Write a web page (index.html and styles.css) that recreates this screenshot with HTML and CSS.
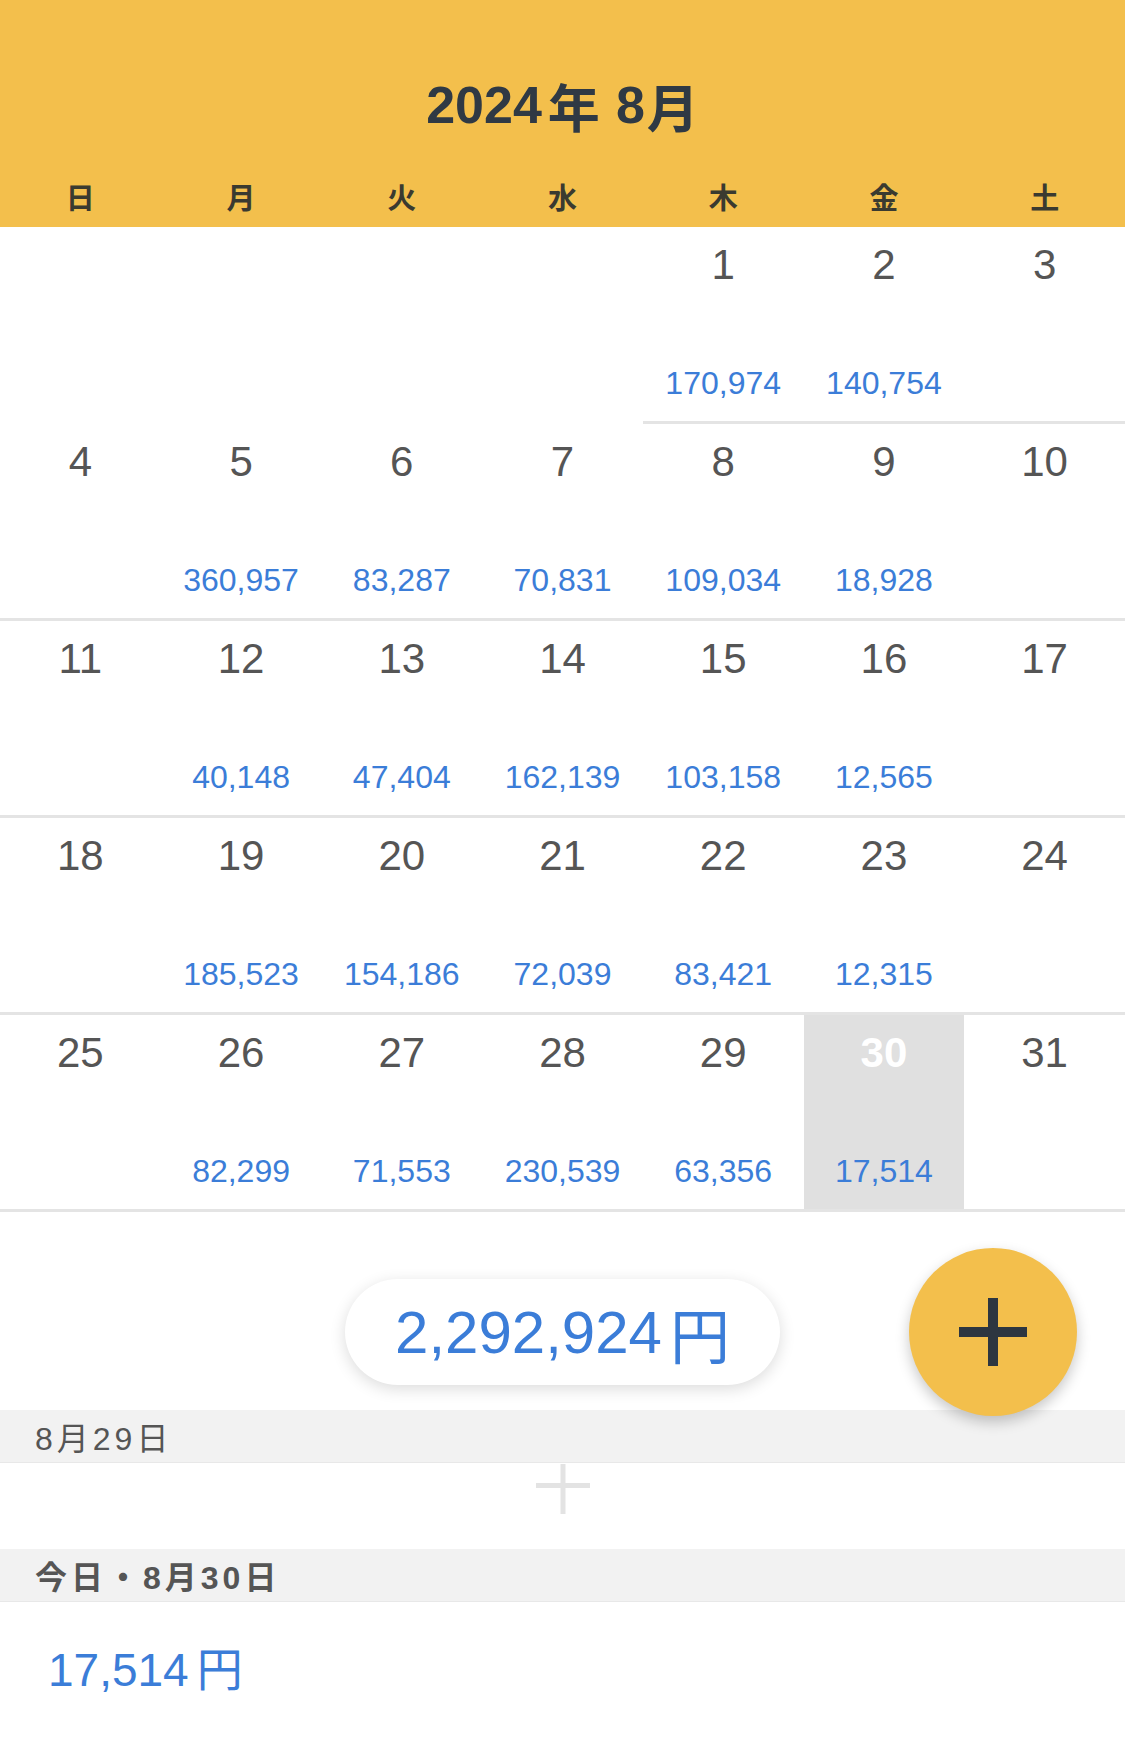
FILE: index.html
```html
<!DOCTYPE html>
<html lang="ja">
<head>
  <meta charset="UTF-8">
  <meta name="viewport" content="width=device-width, initial-scale=1.0">
  <title>家計簿カレンダー</title>
  <link rel="stylesheet" href="styles.css">
</head>
<body>

  <div class="monthHeader">
    <div class="monthTitle">2024<span class="kanji">年</span>8<span class="kanji">月</span></div>
    <div class="weekRow">
      <span>日</span><span>月</span><span>火</span><span>水</span><span>木</span><span>金</span><span>土</span>
    </div>
  </div>

  <div class="calendar">
    <!-- 1週目 -->
    <div class="day blank"></div>
    <div class="day blank"></div>
    <div class="day blank"></div>
    <div class="day blank"></div>
    <div class="day"><span class="num">1</span><span class="amount">170,974</span></div>
    <div class="day"><span class="num">2</span><span class="amount">140,754</span></div>
    <div class="day"><span class="num">3</span></div>

    <div class="day"><span class="num">4</span></div>
    <div class="day"><span class="num">5</span><span class="amount">360,957</span></div>
    <div class="day"><span class="num">6</span><span class="amount">83,287</span></div>
    <div class="day"><span class="num">7</span><span class="amount">70,831</span></div>
    <div class="day"><span class="num">8</span><span class="amount">109,034</span></div>
    <div class="day"><span class="num">9</span><span class="amount">18,928</span></div>
    <div class="day"><span class="num">10</span></div>

    <div class="day"><span class="num">11</span></div>
    <div class="day"><span class="num">12</span><span class="amount">40,148</span></div>
    <div class="day"><span class="num">13</span><span class="amount">47,404</span></div>
    <div class="day"><span class="num">14</span><span class="amount">162,139</span></div>
    <div class="day"><span class="num">15</span><span class="amount">103,158</span></div>
    <div class="day"><span class="num">16</span><span class="amount">12,565</span></div>
    <div class="day"><span class="num">17</span></div>

    <div class="day"><span class="num">18</span></div>
    <div class="day"><span class="num">19</span><span class="amount">185,523</span></div>
    <div class="day"><span class="num">20</span><span class="amount">154,186</span></div>
    <div class="day"><span class="num">21</span><span class="amount">72,039</span></div>
    <div class="day"><span class="num">22</span><span class="amount">83,421</span></div>
    <div class="day"><span class="num">23</span><span class="amount">12,315</span></div>
    <div class="day"><span class="num">24</span></div>

    <div class="day"><span class="num">25</span></div>
    <div class="day"><span class="num">26</span><span class="amount">82,299</span></div>
    <div class="day"><span class="num">27</span><span class="amount">71,553</span></div>
    <div class="day"><span class="num">28</span><span class="amount">230,539</span></div>
    <div class="day"><span class="num">29</span><span class="amount">63,356</span></div>
    <div class="day today"><span class="num">30</span><span class="amount">17,514</span></div>
    <div class="day"><span class="num">31</span></div>
  </div>

  <div class="totalRow">
    <div class="totalPill">2,292,924<span class="yen">円</span></div>
    <button class="addBtn" aria-label="追加">
      <svg width="68" height="68" viewBox="0 0 68 68">
        <rect x="29" y="0" width="10" height="68" fill="#2d3640"/>
        <rect x="0" y="29" width="68" height="10" fill="#2d3640"/>
      </svg>
    </button>
  </div>

  <div class="dateBand">8月29日</div>
  <div class="emptyDay">
    <svg width="54" height="50" viewBox="0 0 54 50">
      <rect x="24.5" y="0" width="5" height="50" fill="#e3e3e3"/>
      <rect x="0" y="19" width="54" height="5" fill="#e3e3e3"/>
    </svg>
  </div>

  <div class="dateBand todayBand">今日・8月30日</div>
  <div class="dayTotal">17,514<span class="yen">円</span></div>

</body>
</html>
```

FILE: styles.css
```css
body {
  margin: 0;
  width: 1125px;
  background: #fff;
  font-family: "Liberation Sans", "Noto Sans CJK JP", sans-serif;
  color: #555;
}

.monthHeader {
  background-color: #f3bf4c;
  padding: 38px 0 7px;
  box-sizing: border-box;
  height: 227px;
}

.monthTitle {
  height: 134px;
  display: flex;
  align-items: center;
  justify-content: center;
  font-size: 52px;
  font-weight: bold;
  color: #2f3944;
}

.monthTitle .kanji {
  margin: 0 16px 0 6px;
}

.monthTitle .kanji:last-child {
  margin: 0 0 0 2px;
}

.weekRow {
  display: grid;
  grid-template-columns: repeat(7, 1fr);
  height: 48px;
  align-items: center;
  text-align: center;
  font-size: 29px;
  font-weight: bold;
  color: #3a3a30;
}

.calendar {
  display: grid;
  grid-template-columns: repeat(7, 1fr);
  grid-auto-rows: 197px;
}

.day {
  display: flex;
  flex-direction: column;
  align-items: center;
  box-sizing: border-box;
  padding: 17px 0 22px;
  border-bottom: 3px solid #e4e4e4;
}

.day.blank {
  border-bottom: none;
}

.num {
  font-size: 42px;
  line-height: 1;
  color: #555;
}

.amount {
  margin-top: auto;
  font-size: 32px;
  line-height: 1;
  color: #3b7dd8;
}

.today {
  background-color: #e0e0e0;
}

.today .num {
  color: #fff;
  font-weight: bold;
}

.totalRow {
  height: 198px;
  box-sizing: border-box;
  padding-top: 36px;
  display: grid;
  grid-template-columns: 1fr auto 1fr;
  align-items: start;
}

.totalPill {
  grid-column: 2;
  margin-top: 31px;
  height: 106px;
  padding: 0 50px;
  display: flex;
  align-items: center;
  border-radius: 53px;
  background: #fff;
  box-shadow: 0 4px 16px rgba(0, 0, 0, 0.14);
  font-size: 60px;
  color: #3b7dd8;
}

.yen {
  margin-left: 8px;
}

.addBtn {
  grid-column: 3;
  justify-self: end;
  margin-right: 48px;
  position: relative;
  z-index: 1;
  width: 168px;
  height: 168px;
  border: none;
  border-radius: 50%;
  padding: 0;
  background-color: #f3bf4c;
  box-shadow: 0 6px 14px rgba(0, 0, 0, 0.22);
  display: flex;
  align-items: center;
  justify-content: center;
}

.dateBand {
  height: 53px;
  box-sizing: border-box;
  padding-left: 35px;
  display: flex;
  align-items: center;
  background-color: #f2f2f2;
  border-bottom: 1px solid #e8e8e8;
  font-size: 32px;
  letter-spacing: 4px;
  color: #555;
}

.todayBand {
  font-weight: bold;
}

.emptyDay {
  height: 86px;
  display: flex;
  justify-content: center;
  align-items: flex-start;
  padding-top: 1px;
  box-sizing: border-box;
}

.dayTotal {
  padding: 45px 0 0 48px;
  font-size: 46px;
  line-height: 1;
  color: #3b7dd8;
}
```
